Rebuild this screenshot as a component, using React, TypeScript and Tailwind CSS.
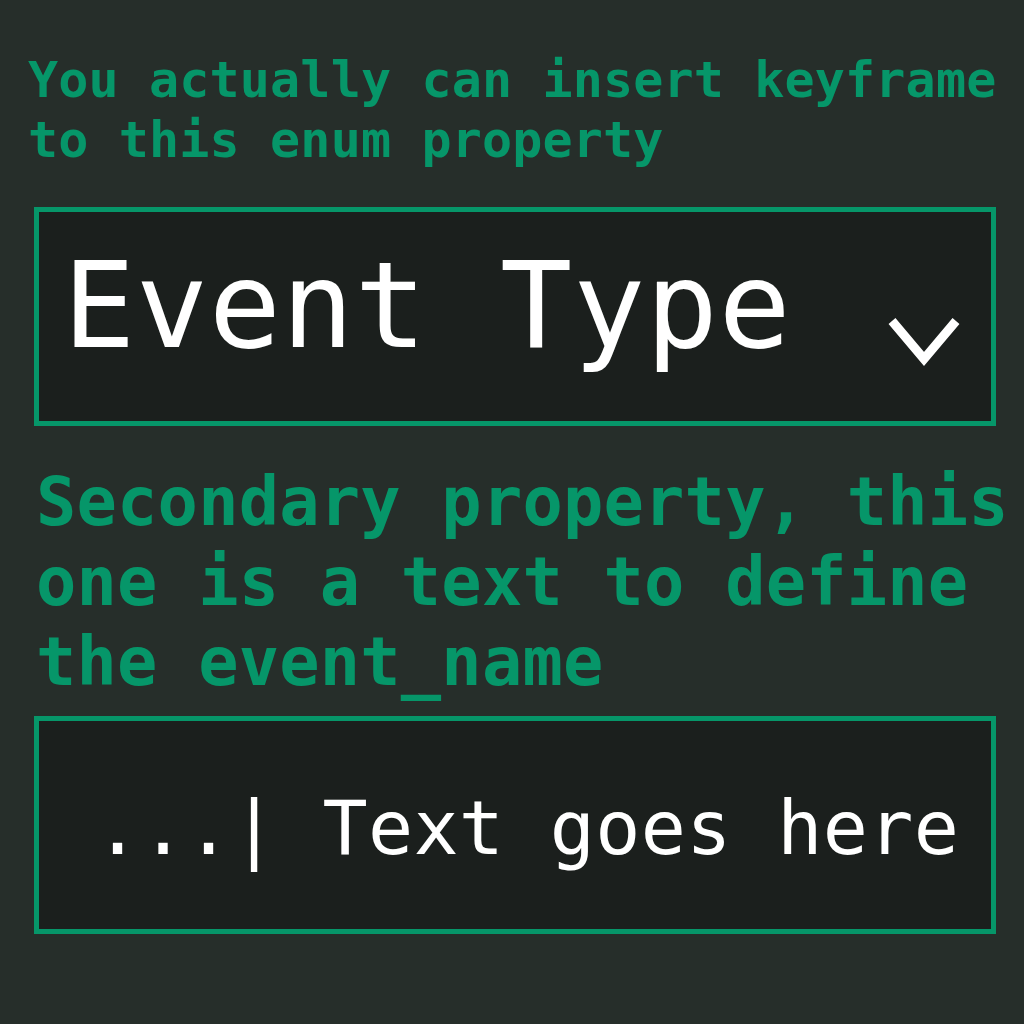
import React from "react";

const mono = "font-['DejaVu_Sans_Mono','Liberation_Mono',monospace]";

const Chevron = () => (
  <svg width="80" height="60" viewBox="0 0 80 60" className="mt-[100px] shrink-0">
    <polyline
      points="8,9 40,47 72,9"
      fill="none"
      stroke="#ffffff"
      strokeWidth="9"
      strokeLinecap="butt"
      strokeLinejoin="miter"
    />
  </svg>
);

const App = () => {
  return (
    <div className={`w-[1024px] h-[1024px] bg-[#262e2a] ${mono} overflow-hidden`}>
      <div className="pt-[50px] pl-[34px] pr-[28px]">
        <p className="ml-[-6px] text-[50px] leading-[60px] font-bold tracking-[0.16px] text-[#069669] whitespace-nowrap">
          You actually can insert keyframe
          <br />
          to this enum property
        </p>

        <div className="mt-[37px] h-[219px] border-[5px] border-[#069669] bg-[#1b1f1d] flex items-start justify-between pl-[24px] pr-[27px]">
          <span className="mt-[34px] text-[120px] leading-[120px] tracking-[0.6px] text-white whitespace-nowrap">
            Event Type
          </span>
          <Chevron />
        </div>

        <p className="mt-[36px] ml-[2px] text-[67px] leading-[80px] font-bold tracking-[0.2px] text-[#069669] whitespace-nowrap">
          Secondary property, this
          <br />
          one is a text to define
          <br />
          the event_name
        </p>

        <div className="mt-[14px] h-[218px] border-[5px] border-[#069669] bg-[#1b1f1d] pl-[56px]">
          <div className="pt-[70px] text-[75px] leading-[75px] tracking-[0.33px] text-white whitespace-pre">
            ...| Text goes here
          </div>
        </div>
      </div>
    </div>
  );
};

export default App;
